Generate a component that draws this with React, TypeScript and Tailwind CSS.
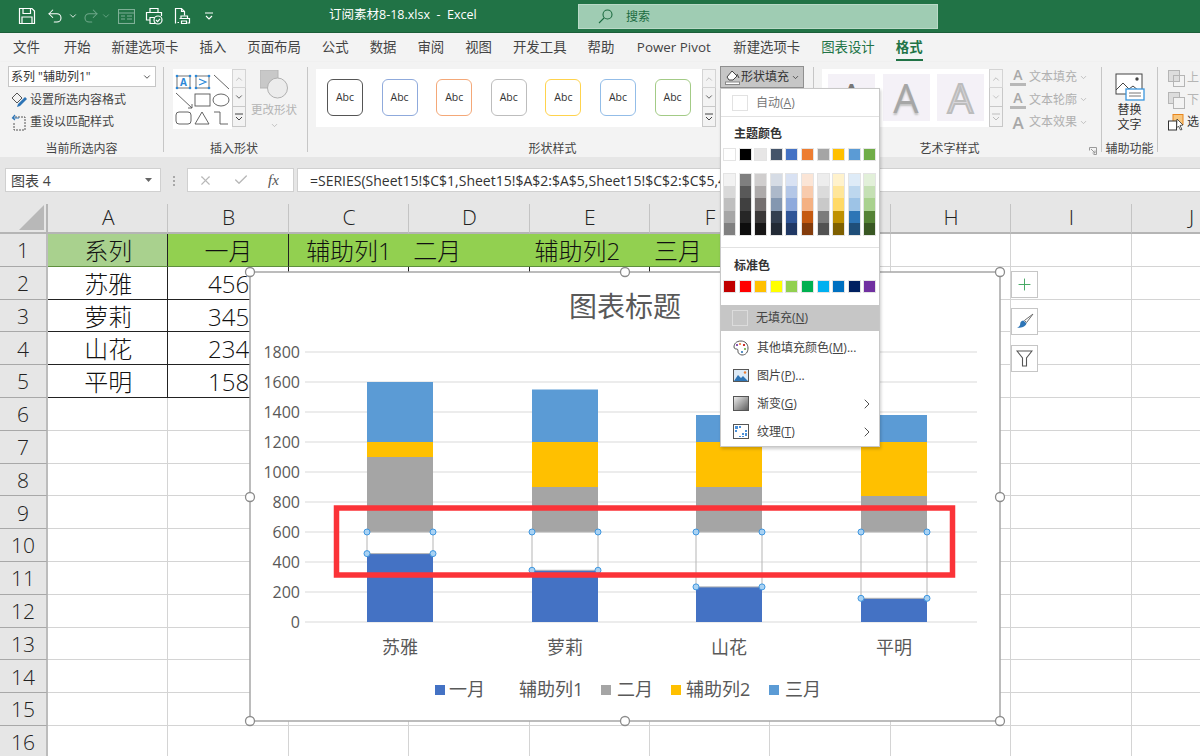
import { ChevronDown, ChevronRight, ChevronUp, Check, X, Plus, Undo2, Redo2 } from "lucide-react";

const tabs = ["开始", "新建选项卡", "插入", "页面布局", "公式", "数据", "审阅", "视图", "开发工具", "帮助", "Power Pivot", "新建选项卡"];
const columns = ["A", "B", "C", "D", "E", "F", "G", "H", "I", "J"];

const abcStyles = [
  "border-[#555555]",
  "border-[#8faadc]",
  "border-[#f4a878]",
  "border-[#bdbdbd]",
  "border-[#ffd34d]",
  "border-[#93bde8]",
  "border-[#a3cb86]",
];

const themeColors = [
  "bg-[#ffffff]", "bg-[#000000]", "bg-[#e7e6e6]", "bg-[#44546a]", "bg-[#4472c4]",
  "bg-[#ed7d31]", "bg-[#a5a5a5]", "bg-[#ffc000]", "bg-[#5b9bd5]", "bg-[#70ad47]",
];

const shades = [
  ["bg-[#f2f2f2]", "bg-[#d9d9d9]", "bg-[#bfbfbf]", "bg-[#a6a6a6]", "bg-[#808080]"],
  ["bg-[#7f7f7f]", "bg-[#595959]", "bg-[#404040]", "bg-[#262626]", "bg-[#0d0d0d]"],
  ["bg-[#d0cece]", "bg-[#aeabab]", "bg-[#757070]", "bg-[#3a3838]", "bg-[#171616]"],
  ["bg-[#d6dce5]", "bg-[#adb9ca]", "bg-[#8497b0]", "bg-[#333f50]", "bg-[#222a35]"],
  ["bg-[#d9e2f3]", "bg-[#b4c7e7]", "bg-[#8faadc]", "bg-[#2f5597]", "bg-[#203864]"],
  ["bg-[#fbe5d6]", "bg-[#f8cbad]", "bg-[#f4b183]", "bg-[#c55a11]", "bg-[#843c0c]"],
  ["bg-[#ededed]", "bg-[#dbdbdb]", "bg-[#c9c9c9]", "bg-[#7b7b7b]", "bg-[#525252]"],
  ["bg-[#fff2cc]", "bg-[#ffe699]", "bg-[#ffd966]", "bg-[#bf9000]", "bg-[#7f6000]"],
  ["bg-[#deebf7]", "bg-[#bdd7ee]", "bg-[#9dc3e6]", "bg-[#2e75b6]", "bg-[#1f4e79]"],
  ["bg-[#e2f0d9]", "bg-[#c5e0b4]", "bg-[#a9d18e]", "bg-[#548235]", "bg-[#385723]"],
];

const standardColors = [
  "bg-[#c00000]", "bg-[#ff0000]", "bg-[#ffc000]", "bg-[#ffff00]", "bg-[#92d050]",
  "bg-[#00b050]", "bg-[#00b0f0]", "bg-[#0070c0]", "bg-[#002060]", "bg-[#7030a0]",
];

const tableRows: Record<number, [string, string]> = {
  2: ["苏雅", "456"],
  3: ["萝莉", "345"],
  4: ["山花", "234"],
  5: ["平明", "158"],
};

const bars = [
  { name: "苏雅", x: 367, jan: 456, feb: 1100, aux2: 1200, mar: 1600 },
  { name: "萝莉", x: 532, jan: 345, feb: 900, aux2: 1200, mar: 1550 },
  { name: "山花", x: 696, jan: 234, feb: 900, aux2: 1200, mar: 1380 },
  { name: "平明", x: 861, jan: 158, feb: 840, aux2: 1200, mar: 1380 },
];

const toY = (v: number) => 622 - v * 0.15;

function QuickAccess() {
  return (
    <div className="flex items-center text-white">
      <svg width="18" height="18" viewBox="0 0 18 18" fill="none" stroke="currentColor" strokeWidth="1.2" className="ml-[18px]">
        <path d="M1.5 1.5h12.5l2.5 2.5v12.5h-15z" />
        <path d="M5 1.5v5h7.5v-5M4 16.5v-6.5h10v6.5" />
      </svg>
      <Undo2 size={18} strokeWidth={1.4} className="ml-[10px]" />
      <ChevronDown size={10} className="ml-[4px]" />
      <Redo2 size={18} strokeWidth={1.4} className="ml-[4px] text-[#6fa88a]" />
      <ChevronDown size={10} className="ml-[1px] text-[#6fa88a]" />
      <svg width="17" height="15" viewBox="0 0 17 15" fill="none" stroke="#7fb097" strokeWidth="1.1" className="ml-[7px]">
        <rect x="0.5" y="0.5" width="16" height="14" />
        <path d="M0.5 4h16M3 7h4M9 7h5M3 10h4M9 10h5" />
      </svg>
      <svg width="18" height="18" viewBox="0 0 18 18" fill="none" stroke="currentColor" strokeWidth="1.2" className="ml-[10px]">
        <path d="M5 5V1.5h8V5M5 13H1.5V5.5h15V9M5 10.5h5v6H5z" />
        <circle cx="13" cy="13" r="4" fill="#217346" />
        <path d="M11 13l1.6 1.6L15 11.8" />
      </svg>
      <svg width="17" height="18" viewBox="0 0 17 18" fill="none" stroke="currentColor" strokeWidth="1.2" className="ml-[11px]">
        <path d="M1.5 16.5V1.5h6l3 3v4M7.5 1.5v3h3" />
        <path d="M5 15.5H3.5M7 11.5V9h6.5v2.5M5.5 11.5h10v4.5h-2M7.5 16.5V14h5v2.5z" fill="#217346" />
      </svg>
      <svg width="10" height="10" viewBox="0 0 10 10" fill="none" stroke="currentColor" strokeWidth="1.1" className="ml-[13px]">
        <path d="M1 2h8M2 5l3 3 3-3" />
      </svg>
    </div>
  );
}

function ScrollButtons({ dim }: { dim?: boolean }) {
  const color = dim ? "text-[#bdbdbd]" : "text-[#444444]";
  return (
    <div className="flex w-[14px] flex-col">
      <div className="flex h-[19px] items-center justify-center border border-[#d4d4d4] bg-[#f3f3f3]">
        <ChevronUp size={10} className="text-[#b5b5b5]" />
      </div>
      <div className="flex h-[19px] items-center justify-center border border-t-0 border-[#c8c8c8] bg-[#f3f3f3]">
        <ChevronDown size={10} className={color} />
      </div>
      <div className="flex h-[20px] items-center justify-center border border-t-0 border-[#c8c8c8] bg-[#f3f3f3]">
        <svg width="10" height="10" viewBox="0 0 10 10" fill="none" stroke="currentColor" className={color}>
          <path d="M1 2h8M2 5l3 3 3-3" />
        </svg>
      </div>
    </div>
  );
}

function GroupLabel({ children, className }: { children: React.ReactNode; className?: string }) {
  return <div className={`mt-auto h-[16px] text-center text-[12px] leading-[16px] text-[#444444] ${className ?? ""}`}>{children}</div>;
}

function ShapeGallery() {
  return (
    <svg width="59" height="60" viewBox="0 0 59 60" fill="none" stroke="#555555" strokeWidth="0.9" className="bg-white">
      <rect x="4" y="7" width="13" height="12" stroke="#666666" />
      <text x="10.5" y="17" textAnchor="middle" fontSize="10" fontWeight="700" fill="#2b88d8" stroke="none">A</text>
      <rect x="23" y="7" width="13" height="12" stroke="#666666" />
      <path d="M26 10l7 3-7 3" stroke="#2b88d8" strokeWidth="1.2" />
      {[[4, 7], [17, 7], [4, 19], [17, 19], [23, 7], [36, 7], [23, 19], [36, 19]].map(([x, y], i) => (
        <circle key={i} cx={x} cy={y} r="1.3" fill="#2b88d8" stroke="none" />
      ))}
      <path d="M41 6l15 14M3 24l16 15M15 39l4 0 0-4" />
      <rect x="22" y="25" width="15" height="12" />
      <ellipse cx="48" cy="31" rx="8" ry="6" />
      <rect x="3" y="43" width="15" height="12" rx="3" />
      <path d="M29 43l7 12H22zM41 43h6v12h8" />
    </svg>
  );
}

function TextEffectRow({ label, kind }: { label: string; kind: "fill" | "line" | "effect" }) {
  return (
    <div className="flex h-[22.5px] items-center text-[#b0b0b0]">
      <div className="relative flex h-[18px] w-[16px] items-center justify-center text-[14px] font-semibold leading-none text-[#a8a8a8]">
        {kind === "effect" ? <span className="text-[17px]">A</span> : <span className="-mt-[4px]">A</span>}
        {kind !== "effect" && <div className="absolute bottom-0 left-0 h-[3px] w-full bg-[#b8b8b8]" />}
      </div>
      <span className="ml-[3px] text-[12px] text-[#b0b0b0]">{label}</span>
      <ChevronDown size={9} className="ml-[2px]" />
    </div>
  );
}

function Ribbon() {
  return (
    <div className="flex h-[95px] bg-[#f3f3f3] shadow-[0_1px_2px_rgba(0,0,0,0.18)]">
      <div className="flex w-[163px] flex-col pl-[8px] pt-[4px]">
        <div className="flex h-[21px] w-[148px] items-center justify-between border border-[#c6c6c6] bg-white pl-[2px] pr-[3px] text-[12px] text-[#333333]">
          <span>系列 "辅助列1"</span>
          <ChevronDown size={10} className="text-[#333333]" />
        </div>
        <div className="mt-[2px] flex h-[22px] items-center pl-[3px] text-[12px] text-[#444444]">
          <svg width="17" height="17" viewBox="0 0 17 17" fill="none" className="mr-[2px]">
            <path d="M1 6l5-5 5 5-5 5z" stroke="#555555" />
            <path d="M7 12l7-7 2 2-7 7-3 1z" fill="#2e75b6" />
          </svg>
          设置所选内容格式
        </div>
        <div className="flex h-[22px] items-center pl-[3px] text-[12px] text-[#444444]">
          <svg width="15" height="17" viewBox="0 0 15 17" fill="none" className="mr-[4px]">
            <path d="M4 3h10v13H3V9" stroke="#555555" strokeDasharray="2 1" />
            <path d="M8 4H2m2-3L1.5 4 4 6" stroke="#2e75b6" strokeWidth="1.2" />
          </svg>
          重设以匹配样式
        </div>
        <GroupLabel className="-ml-[8px]">当前所选内容</GroupLabel>
      </div>
      <div className="my-[5px] w-px bg-[#c6c6c6]" />

      <div className="flex w-[143px] flex-col">
        <div className="flex pl-[9px] pt-[7px]">
          <ShapeGallery />
          <ScrollButtons />
          <div className="ml-[5px] flex w-[46px] flex-col items-center text-[#b3b3b3]">
            <svg width="28" height="29" viewBox="0 0 28 29" className="mt-px">
              <rect x="0" y="0" width="18" height="18" fill="#c8c8c8" stroke="#b5b5b5" />
              <circle cx="17.5" cy="18" r="10" fill="#ececec" stroke="#b0b0b0" />
            </svg>
            <div className="mt-[3px] whitespace-nowrap text-[11.5px] leading-[16px]">更改形状</div>
            <ChevronDown size={9} className="mt-[3px]" />
          </div>
        </div>
        <GroupLabel className="pr-[3px]">插入形状</GroupLabel>
      </div>
      <div className="my-[5px] w-px bg-[#c6c6c6]" />

      <div className="flex w-[505px] flex-col">
        <div className="flex pl-[8px]">
          <div className="mt-[7px] flex h-[58px] w-[386px] gap-[18.6px] bg-white pl-[11px] pt-[10px]">
            {abcStyles.map((c, i) => (
              <div key={i} className={`flex h-[37px] w-[36px] items-center justify-center rounded-[6px] border-[1.5px] text-[10.5px] text-[#333333] ${c}`}>
                Abc
              </div>
            ))}
          </div>
          <div className="mt-[7px]">
            <ScrollButtons />
          </div>
          <div className="ml-[4px] mt-[4px] flex h-[22px] w-[84px] items-center border border-[#8f8f8f] bg-[#c6c6c6] pl-[4px] text-[12px] text-[#333333]">
            <svg width="15" height="16" viewBox="0 0 15 16" fill="none" stroke="#444444" className="mr-[1px]">
              <path d="M2 8l5-6 5 5-4 4H4z" fill="#ffffff" />
              <path d="M12 5l2 4" />
              <rect x="0.5" y="13" width="14" height="2.5" fill="#ffffff" stroke="#888888" />
            </svg>
            形状填充
            <ChevronDown size={9} className="ml-[2px]" />
          </div>
        </div>
        <GroupLabel className="pr-[16px]">形状样式</GroupLabel>
      </div>
      <div className="my-[5px] w-px bg-[#c6c6c6]" />

      <div className="relative flex w-[287px] flex-col">
        <div className="flex pl-[8px]">
          <div className="mt-[7px] flex h-[58px] w-[167px] gap-[7.5px] bg-white pl-[6px] pt-[5px]">
            {["", "shadow", "outline"].map((k) => (
              <div key={k} className="flex h-[47px] w-[47px] items-center justify-center bg-[#f4f1f7] text-[40px] font-medium leading-none">
                {k === "shadow" && <span className="text-[#a6a6a6] [text-shadow:0_2px_2px_#c0c0c0]">A</span>}
                {k === "outline" && <span className="text-[#d9d7dc] [-webkit-text-stroke:2px_#bcbcbc]">A</span>}
                {k === "" && <span className="text-[#777777]">A</span>}
              </div>
            ))}
          </div>
          <div className="mt-[7px]">
            <ScrollButtons dim />
          </div>
          <div className="ml-[7px] mt-[4px] flex flex-col">
            <TextEffectRow label="文本填充" kind="fill" />
            <TextEffectRow label="文本轮廓" kind="line" />
            <TextEffectRow label="文本效果" kind="effect" />
          </div>
        </div>
        <GroupLabel className="pr-[16px]">艺术字样式</GroupLabel>
        <svg width="8" height="8" viewBox="0 0 8 8" fill="none" stroke="#9a9a9a" className="absolute bottom-[2px] right-[4px]">
          <path d="M0.5 3.5V0.5h7v7h-3M2 2l4 4M6 3.5V6H3.5" />
        </svg>
      </div>
      <div className="my-[5px] w-px bg-[#c6c6c6]" />

      <div className="flex w-[55px] flex-col items-center pt-[11px]">
        <svg width="30" height="28" viewBox="0 0 30 28" fill="none">
          <rect x="1" y="1" width="26" height="20" stroke="#444444" fill="#ffffff" />
          <path d="M1 17l7-7 6 6 4-3 6 5" stroke="#444444" />
          <circle cx="22" cy="6" r="1.7" fill="#444444" />
          <rect x="11" y="16" width="18" height="11" fill="#ffffff" stroke="#3a96dd" strokeWidth="1.3" />
          <path d="M14 20h12M14 23h12" stroke="#777777" />
        </svg>
        <div className="mt-[1px] text-center text-[12px] leading-[15px] text-[#333333]">替换<br />文字</div>
        <GroupLabel>辅助功能</GroupLabel>
      </div>
      <div className="my-[5px] w-px bg-[#c6c6c6]" />

      <div className="flex flex-col gap-[4px] pl-[10px] pt-[7px] text-[12px] leading-[18px] text-[#b5b5b5]">
        <div className="flex items-center gap-[2px]">
          <svg width="17" height="17" viewBox="0 0 17 17" fill="#dddddd" stroke="#b5b5b5"><rect x="0.5" y="0.5" width="11" height="11" /><rect x="5.5" y="5.5" width="11" height="11" fill="none" /></svg>
          上
        </div>
        <div className="flex items-center gap-[2px]">
          <svg width="17" height="17" viewBox="0 0 17 17" fill="none" stroke="#b5b5b5"><rect x="0.5" y="0.5" width="11" height="11" fill="#dddddd" /><rect x="5.5" y="5.5" width="11" height="11" fill="#f3f3f3" /></svg>
          下
        </div>
        <div className="flex items-center gap-[2px] text-[#333333]">
          <svg width="17" height="17" viewBox="0 0 17 17" fill="none">
            <rect x="5" y="0.5" width="10" height="10" fill="#f8c67d" stroke="#e8861e" />
            <rect x="0.5" y="7" width="8" height="9" fill="#ffffff" stroke="#333333" />
            <path d="M9 5l6 6-3 .5 2 4-1.5.5-2-4-2 2z" fill="#ffffff" stroke="#333333" strokeWidth="0.8" />
          </svg>
          选
        </div>
      </div>
    </div>
  );
}

function FormulaBar() {
  return (
    <div className="flex h-[47px] items-start bg-[#e6e6e6] pt-[11px]">
      <div className="ml-[5px] flex h-[24px] w-[156px] items-center justify-between border border-[#d0d0d0] bg-white pl-[5px] pr-[8px] text-[14px] text-[#444444]">
        图表 4
        <svg width="7" height="4" viewBox="0 0 7 4" fill="#666666"><path d="M0 0h7L3.5 4z" /></svg>
      </div>
      <div className="ml-[12px] mt-[8px] flex flex-col gap-[2px]">
        {[0, 1, 2].map((i) => (
          <div key={i} className="h-[2px] w-[2px] bg-[#a8a8a8]" />
        ))}
      </div>
      <div className="ml-[12px] flex h-[24px] w-[107px] items-center border border-[#d0d0d0] bg-white text-[#b8b8b8]">
        <X size={15} strokeWidth={1.8} className="ml-[10px]" />
        <Check size={16} strokeWidth={2} className="ml-[20px]" />
        <span className="ml-[19px] font-['Liberation_Serif',serif] text-[15px] italic leading-none text-[#555555]">fx</span>
      </div>
      <div className="ml-[3px] flex h-[24px] flex-1 items-center whitespace-nowrap border border-r-0 border-[#d0d0d0] bg-white pl-[12px] text-[14px] text-[#333333]">
        =SERIES(Sheet15!$C$1,Sheet15!$A$2:$A$5,Sheet15!$C$2:$C$5,4)
      </div>
    </div>
  );
}

function Sheet() {
  const rows = Array.from({ length: 16 }, (_, i) => i + 1);
  return (
    <div className="grid grid-cols-[48px_repeat(10,120.4px)] grid-rows-[30px_repeat(16,32.8px)] bg-white text-[24px] font-light text-[#111111]">
      <div className="flex items-end justify-end border-b-2 border-r-2 border-[#b5b5b5] bg-[#e6e6e6] p-[2px]">
        <div className="h-0 w-0 border-b-[25px] border-l-[25px] border-b-[#b8b8b8] border-l-transparent" />
      </div>
      {columns.map((c) => (
        <div key={c} className="flex items-center justify-center border-b-2 border-r border-b-[#b5b5b5] border-r-[#c4c4c4] bg-[#e6e6e6] pl-[1px] text-[21px] text-[#222222]">
          {c}
        </div>
      ))}
      {rows.map((r) => (
        <RowCells key={r} row={r} />
      ))}
    </div>
  );
}

function RowCells({ row }: { row: number }) {
  const header = (
    <div className="flex items-center justify-center border-b border-r-2 border-b-[#a8a8a8] border-r-[#bcbcbc] bg-[#e6e6e6] pt-[2px] text-[21px] text-[#222222]">{row}</div>
  );
  const blank = "border-b border-r border-[#d4d4d4]";

  if (row === 1) {
    return (
      <>
        {header}
        <div className="flex items-center justify-center border-b border-r border-b-[#5f8f3e] border-r-[#222222] bg-[#a9d18e] pl-[1px] pt-[2px]">系列</div>
        <div className="flex items-center justify-center border-b border-r border-b-[#5f8f3e] border-r-[#222222] bg-[#92d050] pl-[1px] pt-[2px]">一月</div>
        <div className="flex items-center justify-center border-b border-b-[#5f8f3e] bg-[#92d050] pt-[2px]">辅助列1</div>
        <div className="flex items-center border-b border-b-[#5f8f3e] bg-[#92d050] pl-[4px] pt-[2px]">二月</div>
        <div className="flex items-center border-b border-b-[#5f8f3e] bg-[#92d050] pl-[5px] pt-[2px]">辅助列2</div>
        <div className="flex items-center border-b border-b-[#5f8f3e] bg-[#92d050] pl-[4px] pt-[2px]">三月</div>
        {columns.slice(6).map((c) => (
          <div key={c} className={blank} />
        ))}
      </>
    );
  }

  const data = tableRows[row];
  if (data) {
    return (
      <>
        {header}
        <div className="flex items-center justify-center border-b border-r border-[#222222] pl-[1px] pt-[2px]">{data[0]}</div>
        <div className="flex items-center justify-center border-b border-r border-[#222222] pl-[1px] pt-[2px]">{data[1]}</div>
        {columns.slice(2, 6).map((c) => (
          <div key={c} className="border-b border-r border-[#222222]" />
        ))}
        {columns.slice(6).map((c) => (
          <div key={c} className={blank} />
        ))}
      </>
    );
  }

  return (
    <>
      {header}
      {columns.map((c) => (
        <div key={c} className={blank} />
      ))}
    </>
  );
}

function Chart() {
  const handles = [
    [250, 272], [625, 272], [1000, 272], [250, 497], [1000, 497], [250, 721], [625, 721], [1000, 721],
  ];
  const legend = [
    { fill: "#4472c4", x: 435, label: "一月", tx: 449 },
    { fill: "", x: 0, label: "辅助列1", tx: 519 },
    { fill: "#a5a5a5", x: 601, label: "二月", tx: 617 },
    { fill: "#ffc000", x: 671, label: "辅助列2", tx: 686 },
    { fill: "#5b9bd5", x: 769, label: "三月", tx: 785 },
  ];
  return (
    <div className="absolute left-[250px] top-[272px] h-[449px] w-[750px] bg-white">
      <svg width="750" height="449" viewBox="250 272 750 449" className="overflow-visible">
        <rect x="250" y="272" width="750" height="449" fill="#ffffff" stroke="#a6a6a6" strokeWidth="1.5" />
        <text x="625" y="317" textAnchor="middle" fontSize="28" fill="#595959">图表标题</text>
        {[0, 200, 400, 600, 800, 1000, 1200, 1400, 1600, 1800].map((v) => (
          <g key={v}>
            <line x1="305" x2="977" y1={toY(v)} y2={toY(v)} stroke="#d9d9d9" strokeWidth="1.2" />
            <text x="300" y={toY(v) + 6} textAnchor="end" fontSize="16" fill="#595959">{v}</text>
          </g>
        ))}
        {bars.map((b) => (
          <g key={b.name}>
            <rect x={b.x} y={toY(b.jan)} width="66" height={b.jan * 0.15} fill="#4472c4" />
            <rect x={b.x} y={toY(b.feb)} width="66" height={(b.feb - 600) * 0.15} fill="#a5a5a5" />
            <rect x={b.x} y={toY(b.aux2)} width="66" height={(b.aux2 - b.feb) * 0.15} fill="#ffc000" />
            <rect x={b.x} y={toY(b.mar)} width="66" height={(b.mar - b.aux2) * 0.15} fill="#5b9bd5" />
            <rect x={b.x} y={toY(600)} width="66" height={(600 - b.jan) * 0.15} fill="none" stroke="#b5b5b5" strokeWidth="1" />
            <text x={b.x + 33} y="654" textAnchor="middle" fontSize="18" fill="#595959">{b.name}</text>
            {[[b.x, toY(600)], [b.x + 66, toY(600)], [b.x, toY(b.jan)], [b.x + 66, toY(b.jan)]].map(([x, y], i) => (
              <circle key={i} cx={x} cy={y} r="3" fill="#a9d2f3" stroke="#3f97e0" strokeWidth="1" />
            ))}
          </g>
        ))}
        {legend.map((l) => (
          <g key={l.label}>
            {l.fill && <rect x={l.x} y="685" width="10" height="10" fill={l.fill} />}
            <text x={l.tx} y="696" fontSize="18" fill="#595959">{l.label}</text>
          </g>
        ))}
        <rect x="336.5" y="508" width="616" height="67" fill="none" stroke="#fb3338" strokeWidth="5.5" />
        {handles.map(([x, y]) => (
          <circle key={`${x}-${y}`} cx={x} cy={y} r="4.5" fill="#ffffff" stroke="#8c8c8c" strokeWidth="1.3" />
        ))}
      </svg>
    </div>
  );
}

function ChartTools() {
  return (
    <div className="absolute left-[1011px] top-[271px] flex flex-col gap-[10px]">
      <div className="flex h-[27px] w-[27px] items-center justify-center border border-[#c6c6c6] bg-white">
        <Plus size={19} strokeWidth={1.2} className="text-[#3fa65f]" />
      </div>
      <div className="flex h-[27px] w-[27px] items-center justify-center border border-[#c6c6c6] bg-white">
        <svg width="18" height="17" viewBox="0 0 17 16">
          <path d="M16 1l-6 8-2-2z" fill="#ffffff" stroke="#666666" strokeWidth="0.9" />
          <path d="M7 7l3 3c-2 4-6 4-9 4 2-1 3-2 3-4 0-2 2-3 3-3z" fill="#2e75b6" />
        </svg>
      </div>
      <div className="flex h-[27px] w-[27px] items-center justify-center border border-[#c6c6c6] bg-white">
        <svg width="17" height="17" viewBox="0 0 17 17" fill="#ffffff" stroke="#555555" strokeWidth="1.1">
          <path d="M1 1h15l-5.5 7v8h-4V8z" />
        </svg>
      </div>
    </div>
  );
}

function Swatches({ colors }: { colors: string[] }) {
  return (
    <div className="flex gap-[2.6px] pl-[2px]">
      {colors.map((c, i) => (
        <div key={i} className={`h-[13px] w-[13px] border border-[#e4e4e4] ${c}`} />
      ))}
    </div>
  );
}

function MenuRow({ icon, children, arrow }: { icon: React.ReactNode; children: React.ReactNode; arrow?: boolean }) {
  return (
    <div className="flex h-[28px] items-center text-[12px] text-[#444444]">
      <div className="ml-[11px] flex w-[17px] justify-center">{icon}</div>
      <div className="ml-[8px] flex-1">{children}</div>
      {arrow && <ChevronRight size={16} strokeWidth={1.4} className="mr-[4px] text-[#444444]" />}
    </div>
  );
}

function FillMenu() {
  return (
    <div className="absolute left-[720px] top-[88px] flex h-[359px] w-[160px] flex-col border border-[#c8c8c8] bg-white shadow-[1px_2px_3px_rgba(0,0,0,0.2)]">
      <div className="flex h-[28px] items-center border-b border-[#e2e2e2] text-[12px] text-[#777777]">
        <div className="ml-[11px] h-[16px] w-[16px] border border-[#e2e2e2]" />
        <span className="ml-[8px] pt-[1px]">
          自动(<u>A</u>)
        </span>
      </div>
      <div className="mt-[8px] pl-[13px] text-[12px] font-bold leading-[18px] text-[#333333]">主题颜色</div>
      <div className="mt-[5px]">
        <Swatches colors={themeColors} />
      </div>
      <div className="mt-[12px] flex gap-[2.6px] pl-[2px]">
        {shades.map((col, i) => (
          <div key={i} className="flex w-[13px] flex-col border border-[#e4e4e4]">
            {col.map((c) => (
              <div key={c} className={`h-[12.2px] ${c}`} />
            ))}
          </div>
        ))}
      </div>
      <div className="mt-[11px] border-t border-[#e2e2e2]" />
      <div className="mt-[9px] pl-[13px] text-[12px] font-bold leading-[18px] text-[#333333]">标准色</div>
      <div className="mt-[5px]">
        <Swatches colors={standardColors} />
      </div>
      <div className="mt-[12px] flex h-[26px] items-center bg-[#c6c6c6] text-[12px] text-[#444444]">
        <div className="ml-[11px] h-[16px] w-[16px] border border-[#dcdcdc]" />
        <span className="ml-[8px] pt-[1px]">
          无填充(<u>N</u>)
        </span>
      </div>
      <div className="mt-[3px]">
        <MenuRow
          icon={
            <svg width="16" height="16" viewBox="0 0 16 16">
              <path d="M8 1C3 1 1 4 1 7c0 2 2 2 3 2s1 2 1 3 2 3 4 3c4 0 6-3 6-7s-3-7-7-7z" fill="#ffffff" stroke="#555555" />
              <circle cx="7" cy="4" r="1.1" fill="#ed7d31" />
              <circle cx="11" cy="5" r="1.1" fill="#c00000" />
              <circle cx="12" cy="9" r="1.1" fill="#70ad47" />
              <circle cx="9" cy="12" r="1.1" fill="#2e75b6" />
              <circle cx="4" cy="5" r="1.1" fill="#7030a0" />
            </svg>
          }
        >
          其他填充颜色(<u>M</u>)...
        </MenuRow>
        <MenuRow
          icon={
            <svg width="16" height="13" viewBox="0 0 16 13">
              <rect x="0.5" y="0.5" width="15" height="12" fill="#deebf7" stroke="#555555" />
              <path d="M1 12l4-6 3 3 2-2 5 5z" fill="#2e75b6" />
              <circle cx="12" cy="3.5" r="1.2" fill="#ed7d31" />
            </svg>
          }
        >
          图片(<u>P</u>)...
        </MenuRow>
        <MenuRow
          arrow
          icon={
            <svg width="16" height="15" viewBox="0 0 16 15">
              <defs>
                <linearGradient id="fillGradient" x1="0" y1="0" x2="1" y2="1">
                  <stop offset="0" stopColor="#f2f2f2" />
                  <stop offset="1" stopColor="#595959" />
                </linearGradient>
              </defs>
              <rect x="0.5" y="0.5" width="15" height="14" fill="url(#fillGradient)" stroke="#555555" />
            </svg>
          }
        >
          渐变(<u>G</u>)
        </MenuRow>
        <MenuRow
          arrow
          icon={
            <svg width="16" height="15" viewBox="0 0 16 15">
              <rect x="0.5" y="0.5" width="15" height="14" fill="#ffffff" stroke="#555555" />
              <path d="M2 2h3v3H2zM6 2h2v2H6zM2 6h2v2H2zM12 6h2v2h-2zM9 9h2v2H9zM12 9h2v3h-2zM6 12h2v1H6zM9 12h2v1H9z" fill="#4a90d9" />
            </svg>
          }
        >
          纹理(<u>T</u>)
        </MenuRow>
      </div>
    </div>
  );
}

export default function App() {
  return (
    <div className="relative h-[756px] w-[1200px] overflow-hidden bg-white [font-family:'Open_Sans','Noto_Sans_CJK_SC',sans-serif]">
      <div className="relative flex h-[33px] items-center border-b border-[#1b5e39] bg-[#217346]">
        <QuickAccess />
        <div className="absolute left-[329px] top-[5px] whitespace-pre text-[12.5px] leading-[20px] text-white">订阅素材8-18.xlsx  -  Excel</div>
        <div className="absolute left-[578px] top-[4px] flex h-[25px] w-[360px] items-center border border-[#b9d9c7] bg-[#9fccb3] text-[12px] text-[#1c6b41]">
          <svg width="15" height="15" viewBox="0 0 15 15" fill="none" stroke="#1c6b41" strokeWidth="1.1" className="ml-[19px]">
            <circle cx="9.5" cy="5.5" r="4.5" />
            <path d="M6 9l-5 5" />
          </svg>
          <span className="ml-[13px]">搜索</span>
        </div>
      </div>
      <div className="flex h-[29px] items-center gap-[21px] bg-[#f3f3f3] pl-[13px] text-[13.4px] text-[#444444]">
        <span className="mr-[3px]">文件</span>
        {tabs.map((t, i) => (
          <span key={i} className={t === "Power Pivot" ? "mx-[1.5px]" : ""}>{t}</span>
        ))}
        <span className="text-[#217346]">图表设计</span>
        <span className="relative font-bold text-[#217346]">
          格式
          <span className="absolute -bottom-[3px] left-0 h-[2px] w-full bg-[#217346]" />
        </span>
      </div>
      <Ribbon />
      <FormulaBar />
      <Sheet />
      <Chart />
      <ChartTools />
      <FillMenu />
    </div>
  );
}
